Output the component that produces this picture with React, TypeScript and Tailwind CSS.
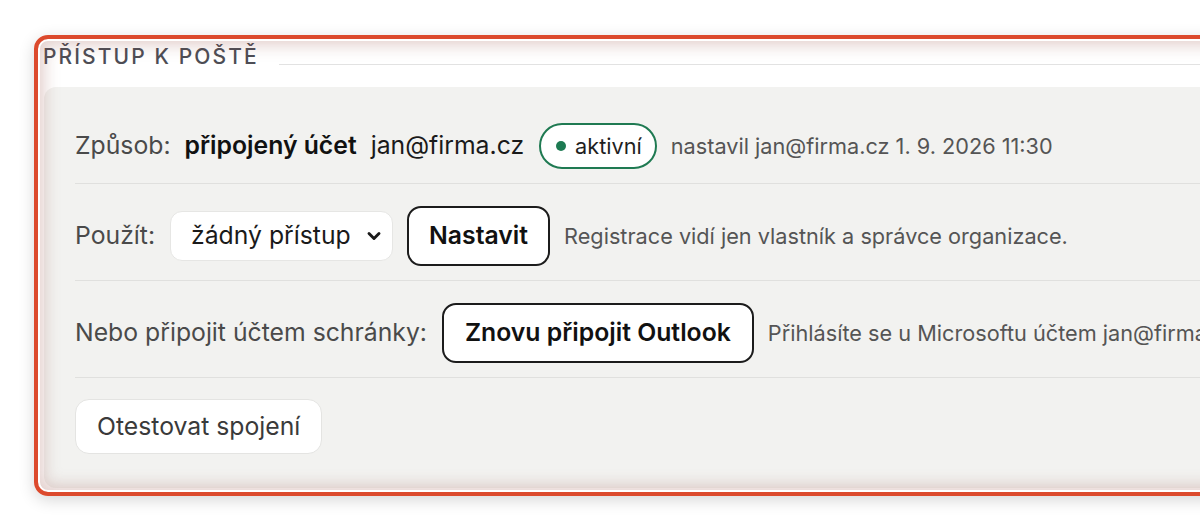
import { ChevronDown } from "lucide-react";

export default function App() {
  return (
    <div className="w-[1200px] h-[529px] overflow-hidden bg-white font-['Inter',sans-serif]">
      <div className="relative ml-[34px] mt-[35px] w-[1230px] rounded-[14px] bg-white pl-[10px] pt-[9px] pb-[8px] shadow-[0_4px_16px_rgba(0,0,0,0.16)]">
        {/* legend */}
        <div className="flex items-end">
          <span className="-ml-[1px] text-[21px] leading-[25px] font-medium tracking-[0.1em] text-[#4d4d55]">
            PŘÍSTUP K POŠTĚ
          </span>
          <div className="ml-[20px] mb-[4px] flex-1 border-t border-[#e2e2e2]" />
        </div>

        <div className="mt-[18px] rounded-[12px] bg-[#f2f2f0] px-[31px] pt-[14px] pb-[19px]">
          {/* Způsob */}
          <div className="flex items-center gap-[14px] border-b border-[#e0e0de] pt-[22px] pb-[14px] whitespace-nowrap">
            <span className="text-[24.75px] text-[#4a4a4a]">Způsob:</span>
            <span className="text-[24.75px] font-semibold text-[#111]">připojený účet</span>
            <span className="text-[24.75px] text-[#1a1a1a]">jan@firma.cz</span>
            <span className="ml-[1px] inline-flex h-[46px] items-center gap-[9px] rounded-full border-2 border-[#1f7a52] bg-white pl-[15px] pr-[13px] text-[21.7px] text-[#1f1f1f]">
              <span className="h-[10px] w-[10px] rounded-full bg-[#1d7a52]" />
              aktivní
            </span>
            <span className="text-[21.7px] text-[#555]">nastavil jan@firma.cz 1. 9. 2026 11:30</span>
          </div>

          {/* Použít */}
          <div className="flex items-center gap-[14px] border-b border-[#e0e0de] pt-[22px] pb-[14px] whitespace-nowrap">
            <span className="mr-[1px] text-[24.75px] text-[#4a4a4a]">Použít:</span>
            <div className="flex h-[50px] w-[223px] items-center justify-between rounded-[12px] border border-[#e6e6e4] bg-white pl-[20px] pr-[8px] text-[24.75px] text-[#1a1a1a]">
              <span>žádný přístup</span>
              <ChevronDown className="h-[20px] w-[20px]" strokeWidth={3.5} />
            </div>
            <button className="h-[60px] rounded-[14px] border-2 border-[#1c1c1c] bg-white px-[20px] text-[24.75px] font-semibold text-[#111]">
              Nastavit
            </button>
            <span className="text-[21.7px] text-[#555]">Registrace vidí jen vlastník a správce organizace.</span>
          </div>

          {/* Nebo připojit */}
          <div className="flex items-center gap-[14px] border-b border-[#e0e0de] pt-[22px] pb-[14px] whitespace-nowrap">
            <span className="mr-[1px] text-[24.75px] text-[#4a4a4a]">Nebo připojit účtem schránky:</span>
            <button className="h-[60px] rounded-[14px] border-2 border-[#1c1c1c] bg-white px-[21px] text-[24.75px] font-semibold text-[#111]">
              Znovu připojit Outlook
            </button>
            <span className="text-[21.7px] text-[#555]">Přihlásíte se u Microsoftu účtem jan@firma.cz</span>
          </div>

          {/* Test */}
          <div className="pt-[21px] pb-[15px]">
            <button className="h-[55px] rounded-[14px] border border-[#e4e4e2] bg-white px-[21px] text-[24.75px] text-[#3a3a3a]">
              Otestovat spojení
            </button>
          </div>
        </div>

        {/* highlight ring */}
        <div className="pointer-events-none absolute inset-0 rounded-[14px] border-[4px] border-[#dc4a2d] shadow-[inset_0_0_0_2px_#fff,inset_0_0_16px_6px_rgba(150,80,70,0.28)]" />
      </div>
    </div>
  );
}
